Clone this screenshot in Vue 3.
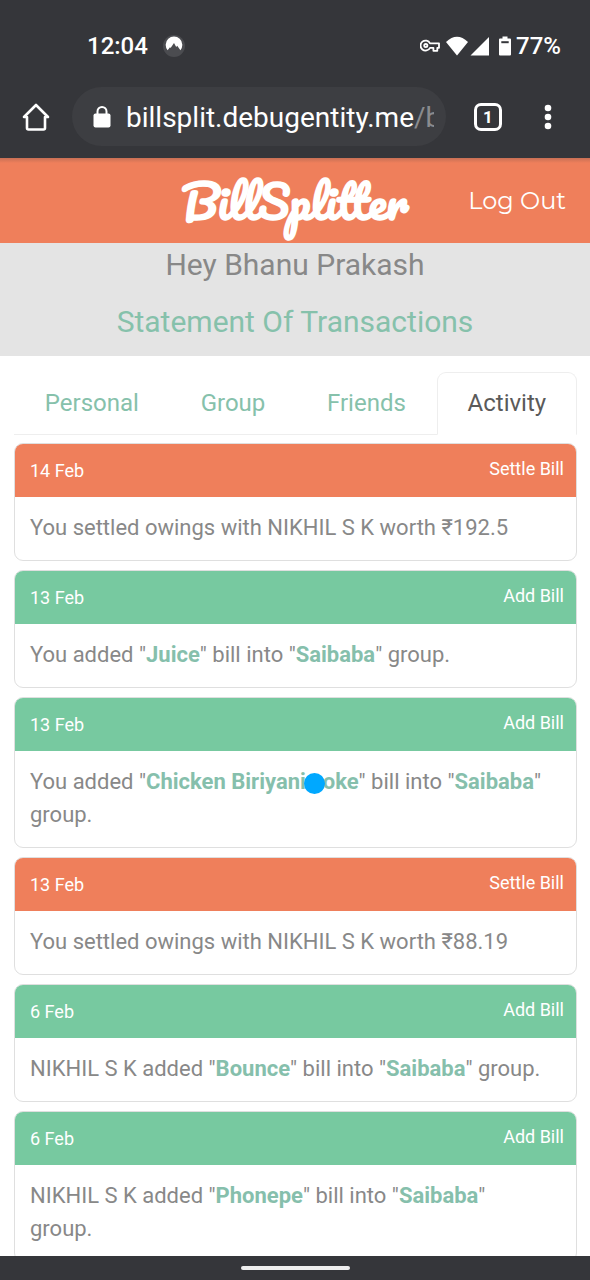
<script setup>
import { ref } from 'vue'

const tabs = ['Personal', 'Group', 'Friends', 'Activity']
const active = ref('Activity')

const settle = (date, person, amount) => ({
  date,
  kind: 'Settle Bill',
  tone: 'orange',
  parts: [{ text: `You settled owings with ${person} worth ₹${amount}` }],
})

const added = (date, who, bill, group) => ({
  date,
  kind: 'Add Bill',
  tone: 'green',
  parts: [
    { text: `${who} added "` },
    { text: bill, strong: true },
    { text: '" bill into "' },
    { text: group, strong: true },
    { text: '" group.' },
  ],
})

const entries = [
  settle('14 Feb', 'NIKHIL S K', '192.5'),
  added('13 Feb', 'You', 'Juice', 'Saibaba'),
  added('13 Feb', 'You', 'Chicken Biriyani coke', 'Saibaba'),
  settle('13 Feb', 'NIKHIL S K', '88.19'),
  added('6 Feb', 'NIKHIL S K', 'Bounce', 'Saibaba'),
  added('6 Feb', 'NIKHIL S K', 'Phonepe', 'Saibaba'),
]
</script>

<template>
  <div class="phone">
    <div class="chrome">
      <div class="status">
        <span class="clock">12:04</span>
        <svg class="vpn" width="22" height="22" viewBox="0 0 22 22" aria-hidden="true">
          <circle cx="11" cy="11" r="11" fill="#4b4c50" />
          <path d="M4.6 15.200A8.300 8.300 0 1 1 17.400 15.200L14.200 10.700L13.200 12L11 8L7.600 13L7 12.200Z" fill="#fff" />
        </svg>
        <div class="indicators">
          <svg width="20" height="14" viewBox="0 0 20 14" fill="none" stroke="#fff" stroke-width="1.8" stroke-linejoin="round" aria-hidden="true">
            <path d="M10 4.3H19V8.8H17.3V11.8H13.4V8.8H10A5 5 0 1 1 10 4.3Z" />
            <circle cx="5.8" cy="6.6" r="1.6" />
          </svg>
          <svg class="wifi" width="24" height="20" viewBox="0 0 24 20" fill="#fff" aria-hidden="true">
            <path d="M1 6Q12 -4.500 23 6L12 19.500Z" />
          </svg>
          <svg width="20" height="20" viewBox="0 0 20 20" fill="#fff" aria-hidden="true">
            <path d="M19 1V19.500H0.500Z" />
          </svg>
          <svg class="battery" width="14" height="20" viewBox="0 0 14 20" aria-hidden="true">
            <path d="M4.500 0.500H9.500V2.500H12Q13 2.500 13 3.500V18.500Q13 19.500 12 19.500H2Q1 19.500 1 18.500V3.500Q1 2.500 2 2.500H4.500Z" fill="#fff" />
            <path d="M3.300 5.200H10.700V7.200H3.300Z" fill="#35363a" />
          </svg>
          <span class="percent">77%</span>
        </div>
      </div>
      <div class="toolbar">
        <button class="icon" aria-label="Home">
          <svg width="28" height="28" viewBox="0 0 28 28" fill="none" stroke="#fff" stroke-width="2.600" stroke-linejoin="round" stroke-linecap="round" aria-hidden="true">
            <path d="M14 2L26 14H23V25Q23 26.500 21.500 26.500H6.500Q5 26.500 5 25V14H2Z" />
          </svg>
        </button>
        <div class="address">
          <svg width="18" height="22" viewBox="0 0 18 22" aria-hidden="true">
            <rect x="0.500" y="7.500" width="17" height="14" rx="2" fill="#fff" />
            <path d="M4.500 9V5.500A4.500 4.500 0 0 1 13.500 5.500V9" fill="none" stroke="#fff" stroke-width="2" />
          </svg>
          <span class="url">billsplit.debugentity.me<span class="path">/b</span></span>
        </div>
        <button class="icon" aria-label="Open tabs"><span class="count">1</span></button>
        <button class="icon menu" aria-label="Menu">
          <svg width="8" height="26" viewBox="0 0 8 26" fill="#fff" aria-hidden="true">
            <circle cx="4" cy="4" r="3.300" /><circle cx="4" cy="13" r="3.300" /><circle cx="4" cy="22" r="3.300" />
          </svg>
        </button>
      </div>
    </div>

    <header class="brandbar">
      <a class="brand" href="#">BillSplitter</a>
      <a class="logout" href="#">Log Out</a>
    </header>

    <section class="hero">
      <p class="greeting">Hey Bhanu Prakash</p>
      <h1 class="title">Statement Of Transactions</h1>
    </section>

    <main class="content">
      <nav class="tabs">
        <a
          v-for="tab in tabs"
          :key="tab"
          href="#"
          class="tab"
          :class="{ active: tab === active }"
          @click.prevent="active = tab"
        >{{ tab }}</a>
      </nav>
      <div class="list">
        <article v-for="(entry, i) in entries" :key="i" class="card">
          <div class="head" :class="entry.tone">
            <span class="date">{{ entry.date }}</span>
            <span class="kind">{{ entry.kind }}</span>
          </div>
          <p class="body">
            <template v-for="(part, j) in entry.parts" :key="j"><b v-if="part.strong">{{ part.text }}</b><template v-else>{{ part.text }}</template></template>
          </p>
        </article>
      </div>
    </main>

    <div class="gesture"><span class="handle"></span></div>
    <span class="touch"></span>
  </div>
</template>

<style>
body {
  background: #fff;
}
</style>

<style scoped>
.phone {
  position: relative;
  display: flex;
  flex-direction: column;
  height: 100vh;
  overflow: hidden;
  background: #fff;
  color: #888;
  font-family: Roboto, "Noto Sans", sans-serif;
  font-size: 22px;
}
.phone * {
  box-sizing: border-box;
}
a {
  text-decoration: none;
}
.chrome {
  flex: none;
  background: #35363a;
  color: #fff;
  padding: 32px 0 12px;
}
.status {
  display: flex;
  align-items: center;
  height: 28px;
  padding: 0 29px 0 87px;
  font-size: 24px;
  font-weight: 500;
}
.vpn {
  margin-left: 15px;
}
.indicators {
  display: flex;
  align-items: center;
  margin-left: auto;
}
.wifi {
  margin: 0 1px 0 5px;
}
.battery {
  margin: 0 4px 0 8px;
}
.toolbar {
  display: flex;
  align-items: center;
  margin-top: 27px;
  height: 59px;
}
.icon {
  flex: none;
  display: flex;
  align-items: center;
  justify-content: center;
  width: 72px;
  height: 48px;
  padding: 0;
  border: 0;
  background: none;
  color: #fff;
}
.address {
  flex: 1;
  min-width: 0;
  display: flex;
  align-items: center;
  gap: 15px;
  height: 59px;
  padding: 0 12px 0 21px;
  border-radius: 30px;
  background: #3d3e42;
}
.address svg {
  flex: none;
}
.url {
  flex: 1;
  overflow: hidden;
  padding-top: 2px;
  white-space: nowrap;
  font-size: 28px;
  line-height: 40px;
}
.path {
  color: #8a8b8e;
}
.toolbar .address + .icon {
  width: 84px;
}
.count {
  display: flex;
  align-items: center;
  justify-content: center;
  width: 28px;
  height: 28px;
  border: 3px solid #fff;
  border-radius: 7px;
  font: 700 17px Roboto, sans-serif;
}
.toolbar .menu {
  width: 36px;
  margin-right: 24px;
}
.brandbar {
  flex: none;
  display: grid;
  grid-template-columns: 1fr auto 1fr;
  align-items: center;
  height: 85px;
  padding: 0 24px;
  background: linear-gradient(#c87055, #ef7f5b 5px);
}
.brand {
  grid-column: 2;
  color: #fff;
  font-family: Pacifico, cursive;
  font-size: 45px;
  font-weight: 700;
  line-height: 80px;
}
.logout {
  justify-self: end;
  color: #fff;
  font-family: Montserrat, sans-serif;
  font-size: 24px;
  font-weight: 400;
  white-space: nowrap;
}
.hero {
  flex: none;
  padding: 2px 16px 14px;
  background: #e4e4e4;
  text-align: center;
}
.greeting,
.title {
  margin: 0;
  font-size: 30px;
  font-weight: 400;
  line-height: 40px;
}
.title {
  margin-top: 17px;
  color: #86c1ab;
}
.content {
  flex: 1;
  min-height: 0;
  overflow: hidden;
  padding: 16px 13px 0 14px;
}
.tabs {
  display: flex;
  border-bottom: 1px solid #eee;
}
.tab {
  flex: 1 1 auto;
  margin-bottom: -1px;
  padding: 15px 12px;
  border: 1px solid transparent;
  border-radius: 9px 9px 0 0;
  color: #86c1ab;
  font-size: 24px;
  line-height: 31px;
  text-align: center;
}
.tab.active {
  border-color: #eee;
  border-bottom-color: #fff;
  background: #fff;
  color: #5a5a5a;
}
.list {
  display: flex;
  flex-direction: column;
  gap: 9px;
  padding-top: 8px;
}
.card {
  flex: none;
  overflow: hidden;
  border: 1px solid #dfdfdf;
  border-radius: 9px;
}
.head {
  display: flex;
  align-items: flex-start;
  justify-content: space-between;
  padding: 11px 12px 10px 15px;
  color: #fff;
  font-size: 18px;
}
.head.orange {
  background: #ef7f5b;
}
.head.green {
  background: #77c9a0;
}
.date {
  line-height: 32px;
}
.kind {
  line-height: 28px;
}
.body {
  margin: 0;
  padding: 14px 25px 16px 15px;
  line-height: 33px;
}
.body b {
  color: #86bfac;
  font-weight: 700;
}
.gesture {
  flex: none;
  display: flex;
  align-items: center;
  justify-content: center;
  height: 24px;
  background: #35363a;
}
.handle {
  width: 109px;
  height: 4px;
  border-radius: 2px;
  background: #eee;
}
.touch {
  position: absolute;
  left: 304px;
  top: 773px;
  width: 21px;
  height: 21px;
  border-radius: 50%;
  background: #00a8ff;
}
</style>
